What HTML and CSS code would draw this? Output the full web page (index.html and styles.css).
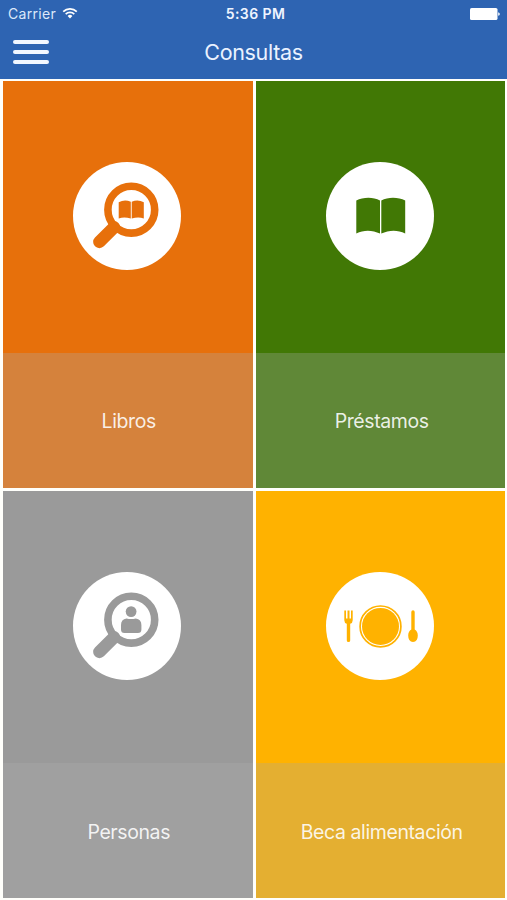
FILE: index.html
```html
<!DOCTYPE html>
<html lang="es">
<head>
    <meta charset="UTF-8">
    <meta name="viewport" content="width=device-width, initial-scale=1.0">
    <title>Consultas</title>
    <link rel="stylesheet" href="styles.css">
</head>
<body>
    <header>
        <div class="status-bar">
            <div class="carrier">
                <span>Carrier</span>
                <svg class="wifi" viewBox="0 0 16 12">
                    <path d="M1.2 4.6a9.8 9.8 0 0 1 13.6 0M3.7 7.1a6.2 6.2 0 0 1 8.6 0" />
                    <path class="wifi-dot" d="M8 11.4L5.6 9a3.4 3.4 0 0 1 4.8 0z" />
                </svg>
            </div>
            <div class="time">5:36 PM</div>
            <div class="battery-wrap">
                <svg class="battery" viewBox="0 0 30 12">
                    <rect x="0" y="0" width="27.5" height="12" rx="1.6" />
                    <path d="M28.2 4.2q1.6.4 1.6 1.8t-1.6 1.8z" />
                </svg>
            </div>
        </div>
        <div class="nav-bar">
            <button class="menu" aria-label="Menú">
                <span></span>
                <span></span>
                <span></span>
            </button>
            <h1>Consultas</h1>
        </div>
    </header>
    <main class="grid">
        <a class="tile libros">
            <div class="tile-top">
                <svg class="icon" viewBox="0 0 108 108">
                    <circle class="disc" cx="54" cy="54" r="54" />
                    <circle class="lens" cx="58.3" cy="47.7" r="23.4" />
                    <path class="handle" d="M26.4 79.9L41 65.3" />
                    <path d="M45.7 40.2Q51.7 37.2 57.8 39.8V56.6Q51 54.2 45.7 56.6z" />
                    <path d="M58.7 39.8Q64.8 37.2 70.8 40.2V56.6Q65.5 54.2 58.7 56.6z" />
                </svg>
            </div>
            <div class="tile-label">Libros</div>
        </a>
        <a class="tile prestamos">
            <div class="tile-top">
                <svg class="icon" viewBox="0 0 108 108">
                    <circle class="disc" cx="54" cy="54" r="54" />
                    <path d="M30.3 38.6C37 35 47 34.8 54 38.4V71.6C46.5 67.9 38 67.6 30.3 71.4z" />
                    <path d="M55.3 38.4C62.3 34.8 72.5 35 79.2 38.6V71.4C71.5 67.6 62.8 67.9 55.3 71.6z" />
                </svg>
            </div>
            <div class="tile-label">Préstamos</div>
        </a>
        <a class="tile personas">
            <div class="tile-top">
                <svg class="icon" viewBox="0 0 108 108">
                    <circle class="disc" cx="54" cy="54" r="54" />
                    <circle class="lens" cx="58.3" cy="47.7" r="23.4" />
                    <path class="handle" d="M26.4 79.9L41 65.3" />
                    <circle cx="58.1" cy="39.6" r="5.4" />
                    <path d="M53.5 46.4Q58.2 47.6 62.8 46.4Q68.4 47.2 68.4 53V57.5Q68.4 61 64.9 61H51.5Q48 61 48 57.5V53Q48 47.2 53.5 46.4z" />
                </svg>
            </div>
            <div class="tile-label">Personas</div>
        </a>
        <a class="tile beca">
            <div class="tile-top">
                <svg class="icon" viewBox="0 0 108 108">
                    <circle class="disc" cx="54" cy="54" r="54" />
                    <circle class="plate-rim" cx="54.5" cy="54.4" r="20.4" />
                    <circle cx="54.5" cy="54.4" r="18.5" />
                    <path d="M18.3 38.6h1.7v8h1.5v-8h2v8h1.5v-8h1.7v9.6q0 2.8-2.5 3.6v16.7q0 1.5-1.7 1.5t-1.7-1.5V51.8q-2.5-.8-2.5-3.6z" />
                    <path d="M85.3 39.9q0-1.6 1.7-1.6t1.7 1.6v17.6q3.1 1.8 3.1 6 0 6.3-4.8 6.5-4.8-.2-4.8-6.5 0-4.2 3.1-6z" />
                </svg>
            </div>
            <div class="tile-label">Beca alimentación</div>
        </a>
    </main>
</body>
</html>
```

FILE: styles.css
```css
* {
    box-sizing: border-box;
}
body {
    font-family: Inter, "Liberation Sans", Arial, sans-serif;
    margin: 0;
    padding: 0;
    height: 900px;
    background-color: #fffffb;
    color: white;
    overflow: hidden;
}
header {
    height: 79px;
    background-color: #2e64b2;
}
.status-bar {
    display: grid;
    grid-template-columns: 1fr auto 1fr;
    align-items: center;
    height: 27px;
    padding: 0 7px 0 8px;
    font-size: 14px;
    line-height: 27px;
}
.carrier {
    display: flex;
    align-items: center;
    gap: 6px;
    color: #dce8fa;
    letter-spacing: 0.3px;
}
.wifi {
    width: 16px;
    height: 12px;
    margin-bottom: 2px;
    fill: none;
    stroke: white;
    stroke-width: 1.7;
}
.wifi .wifi-dot {
    fill: white;
    stroke: none;
}
.time {
    padding-left: 3px;
    font-weight: 600;
    letter-spacing: 0.4px;
    color: #eef4ff;
}
.battery-wrap {
    display: flex;
    justify-content: flex-end;
}
.battery {
    width: 30px;
    height: 12px;
    fill: white;
}
.nav-bar {
    display: grid;
    grid-template-columns: 1fr auto 1fr;
    align-items: center;
    height: 50px;
    padding: 0 13px;
}
.menu {
    display: flex;
    flex-direction: column;
    gap: 6px;
    width: 36px;
    padding: 0;
    border: none;
    background: none;
    cursor: pointer;
}
.menu span {
    height: 4.3px;
    border-radius: 2px;
    background-color: #f2f7ff;
}
h1 {
    margin: 0;
    font-size: 21.5px;
    font-weight: 400;
    letter-spacing: -0.35px;
    color: #eaf2ff;
}
.grid {
    display: grid;
    grid-template-columns: 249.5px 249.5px;
    grid-template-rows: 407px 407px;
    gap: 3.4px;
    padding: 2px 0 0 3px;
}
.tile {
    display: flex;
    flex-direction: column;
    background-color: var(--color);
}
.tile-top {
    height: 271.5px;
    padding: 81px 1px 0 0;
    text-align: center;
}
.icon {
    width: 108px;
    height: 108px;
    fill: var(--color);
}
.icon .disc {
    fill: white;
}
.icon .lens {
    fill: none;
    stroke: var(--color);
    stroke-width: 7.6;
}
.icon .handle {
    stroke: var(--color);
    stroke-width: 12.5;
    stroke-linecap: round;
}
.icon .plate-rim {
    fill: none;
    stroke: var(--color);
    stroke-width: 1.7;
}
.tile-label {
    display: flex;
    flex: 1;
    align-items: center;
    justify-content: center;
    padding: 2px 0 0 2px;
    background-color: var(--label);
    color: rgba(255, 255, 255, 0.88);
    font-size: 19.5px;
    letter-spacing: -0.4px;
}
.libros {
    --color: #e7700b;
    --label: #d5823c;
}
.prestamos {
    --color: #417805;
    --label: #608837;
}
.personas {
    --color: #9a9a9a;
    --label: #a0a0a0;
}
.beca {
    --color: #ffb200;
    --label: #e4af31;
}
```
